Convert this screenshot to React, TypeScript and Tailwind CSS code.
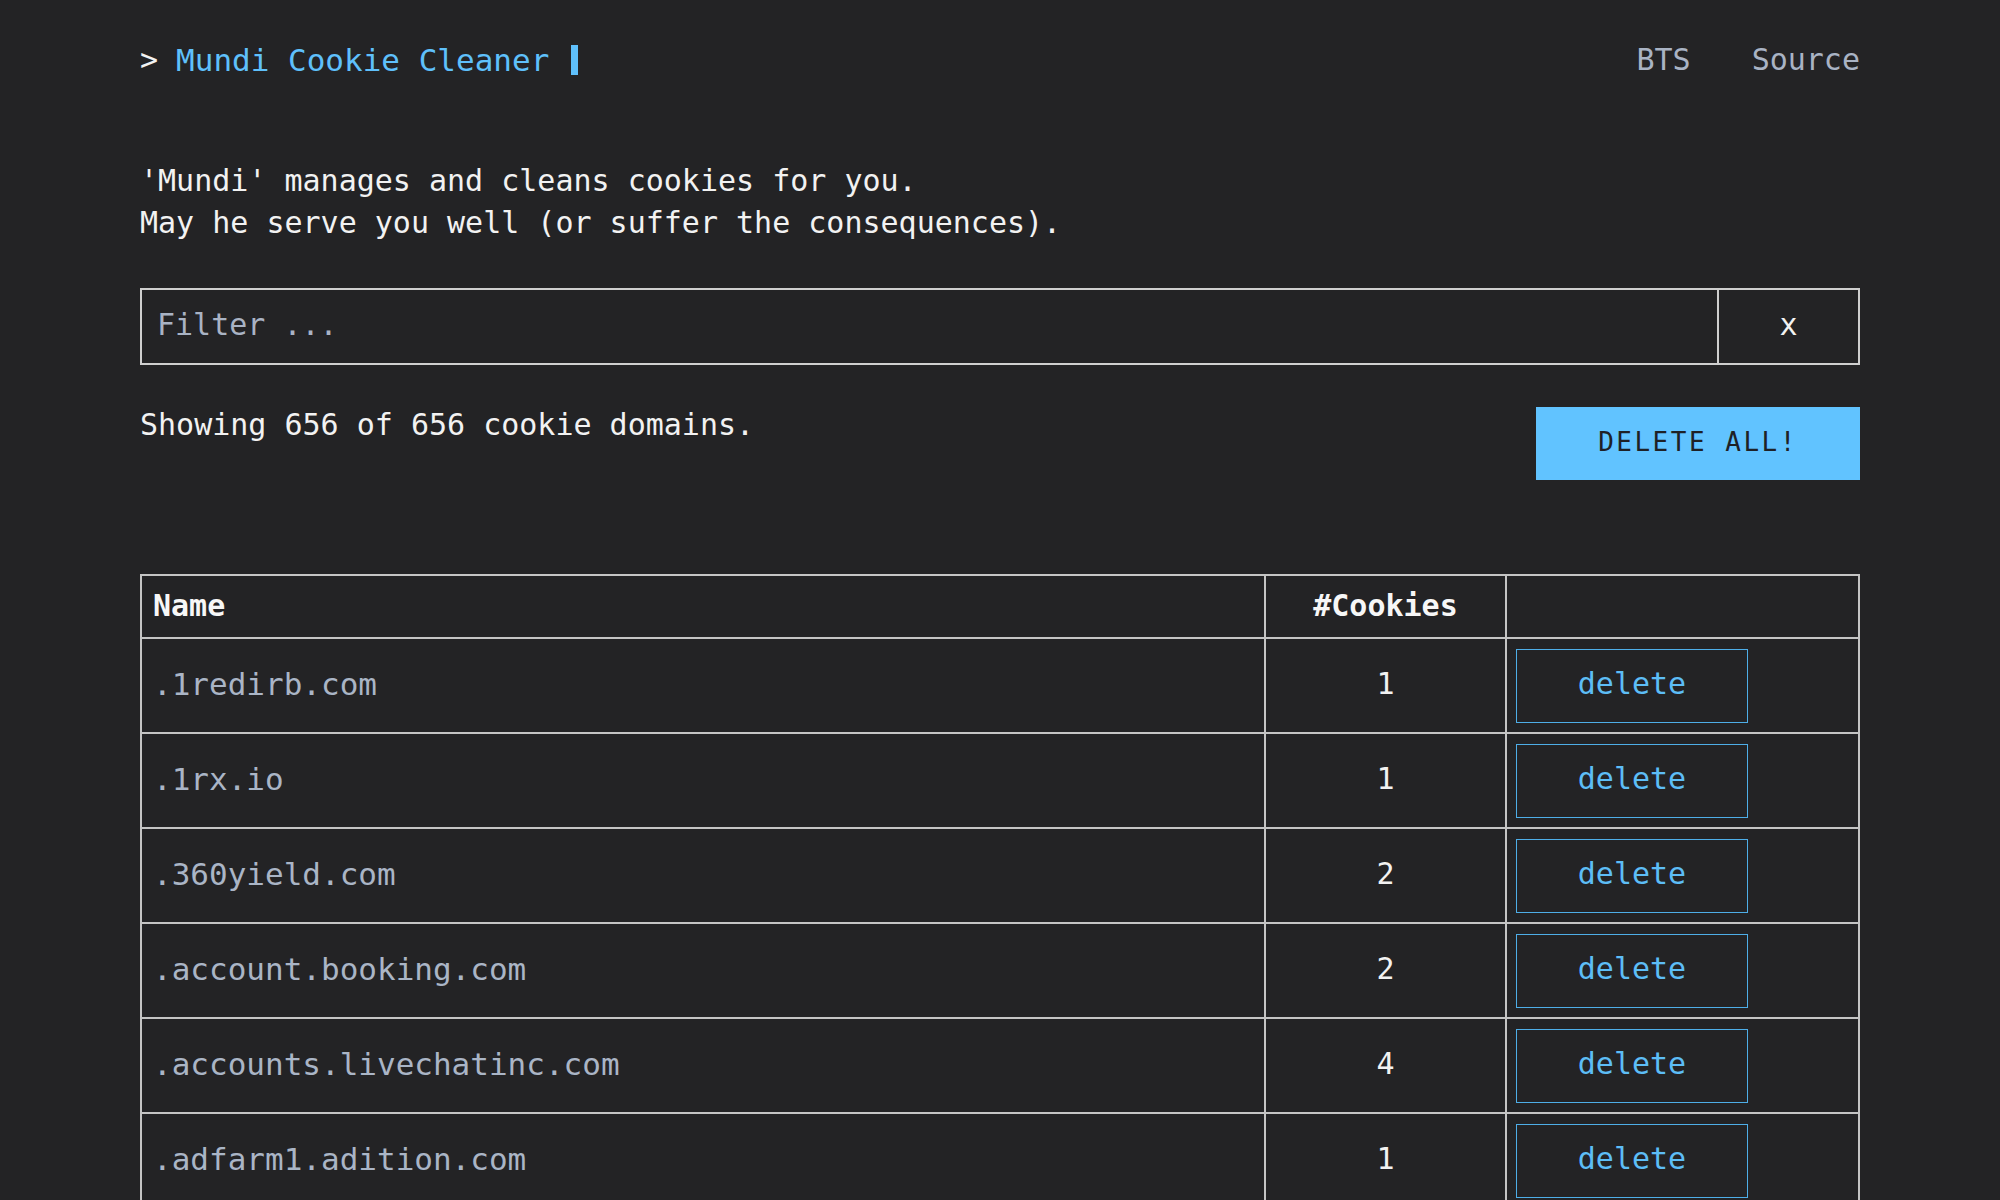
import { useState } from "react";

const mono = "font-['DejaVu_Sans_Mono','Liberation_Mono',monospace]";

export default function App() {
  const [filter, setFilter] = useState("");

  const domains = [
    { name: ".1redirb.com", count: 1 },
    { name: ".1rx.io", count: 1 },
    { name: ".360yield.com", count: 2 },
    { name: ".account.booking.com", count: 2 },
    { name: ".accounts.livechatinc.com", count: 4 },
    { name: ".adfarm1.adition.com", count: 1 },
  ];

  const visible = domains.filter((d) => d.name.includes(filter));

  return (
    <main className={`min-h-screen bg-[#232325] text-[#f2f2f2] ${mono} text-[30px] leading-[42px]`}>
      <div className="w-[1720px] mx-auto">
        {/* Header */}
        <header className="flex items-center justify-between pt-[39px]">
          <div className="flex items-center">
            <span className="text-[#f2f2f2]">&gt;</span>
            <span className="ml-[18px] text-[31px] text-[#5fc0fb]">Mundi Cookie Cleaner</span>
            <span className="ml-[22px] inline-block w-[7px] h-[30px] bg-[#5fc0fb]"></span>
          </div>
          <nav className="flex items-center gap-[61px] text-[#a9b3c4]">
            <a href="#">BTS</a>
            <a href="#">Source</a>
          </nav>
        </header>

        {/* Intro */}
        <p className="mt-[79px]">
          'Mundi' manages and cleans cookies for you.
          <br />
          May he serve you well (or suffer the consequences).
        </p>

        {/* Filter */}
        <div className="mt-[44px] flex h-[77px] border-2 border-[#cfcfcf]">
          <input
            type="text"
            placeholder="Filter ..."
            value={filter}
            onChange={(e) => setFilter(e.target.value)}
            className="flex-1 bg-transparent px-[15px] pb-[3px] outline-none text-[#f2f2f2] placeholder:text-[#a9b3c4]"
          />
          <button
            onClick={() => setFilter("")}
            className="w-[141px] pb-[3px] border-l-2 border-[#cfcfcf] text-[#f2f2f2]"
          >
            x
          </button>
        </div>

        {/* Count + delete all */}
        <div className="mt-[40px] flex items-start justify-between">
          <p className="-mt-[1px]">Showing 656 of 656 cookie domains.</p>
          <button className="mt-[2px] w-[324px] h-[73px] pb-[3px] bg-[#61c3ff] text-[#1e2126] text-[26px] tracking-[2.5px]">
            DELETE ALL!
          </button>
        </div>

        {/* Table */}
        <table className="mt-[94px] w-full border-collapse border-2 border-[#c4c4c4]">
          <thead>
            <tr className="h-[63px]">
              <th className="w-[1124px] border-2 border-[#c4c4c4] px-[11px] pb-[2px] text-left font-bold text-[#f7f7f7]">Name</th>
              <th className="w-[241px] border-2 border-[#c4c4c4] pb-[2px] text-center font-bold text-[#f7f7f7]">#Cookies</th>
              <th className="border-2 border-[#c4c4c4]"></th>
            </tr>
          </thead>
          <tbody>
            {visible.map((d) => (
              <tr key={d.name} className="h-[95px]">
                <td className="border-2 border-[#c4c4c4] px-[11px] pb-[4px] text-[31px] text-[#aab5c6]">{d.name}</td>
                <td className="border-2 border-[#c4c4c4] pb-[3px] text-center">{d.count}</td>
                <td className="border-2 border-[#c4c4c4] px-[9px]">
                  <button className="w-[232px] h-[74px] pb-[3px] border-[1.5px] border-[#4eaee8] text-[#5dbdf6]">
                    delete
                  </button>
                </td>
              </tr>
            ))}
          </tbody>
        </table>
      </div>
    </main>
  );
}
